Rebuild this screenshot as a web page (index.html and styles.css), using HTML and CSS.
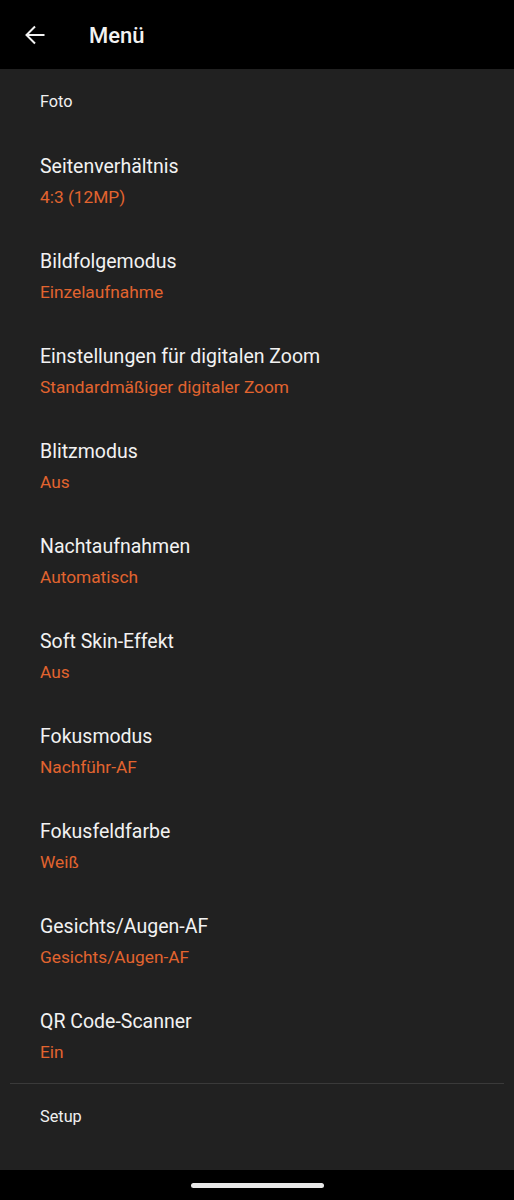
FILE: index.html
```html
<!DOCTYPE html>
<html lang="de">
<head>
<meta charset="utf-8">
<link rel="stylesheet" href="styles.css">
</head>
<body>
<div class="screen">
  <header class="appbar">
    <svg class="back" width="20" height="20" viewBox="0 0 20 20"><path d="M19.5 10H1.5M10 1.5L1.5 10L10 18.5" fill="none" stroke="#f2f2f2" stroke-width="2"/></svg>
    <h1 class="title">Menü</h1>
  </header>
  <main class="content">
    <div class="section">Foto</div>
    <div class="item"><div class="item-title">Seitenverhältnis</div><div class="item-value">4:3 (12MP)</div></div>
    <div class="item"><div class="item-title">Bildfolgemodus</div><div class="item-value">Einzelaufnahme</div></div>
    <div class="item"><div class="item-title">Einstellungen für digitalen Zoom</div><div class="item-value">Standardmäßiger digitaler Zoom</div></div>
    <div class="item"><div class="item-title">Blitzmodus</div><div class="item-value">Aus</div></div>
    <div class="item"><div class="item-title">Nachtaufnahmen</div><div class="item-value">Automatisch</div></div>
    <div class="item"><div class="item-title">Soft Skin-Effekt</div><div class="item-value">Aus</div></div>
    <div class="item"><div class="item-title">Fokusmodus</div><div class="item-value">Nachführ-AF</div></div>
    <div class="item"><div class="item-title">Fokusfeldfarbe</div><div class="item-value">Weiß</div></div>
    <div class="item"><div class="item-title">Gesichts/Augen-AF</div><div class="item-value">Gesichts/Augen-AF</div></div>
    <div class="item"><div class="item-title">QR Code-Scanner</div><div class="item-value">Ein</div></div>
    <div class="divider"></div>
    <div class="section">Setup</div>
  </main>
  <footer class="navbar"><div class="pill"></div></footer>
</div>
</body>
</html>
```
FILE: styles.css
```css
html, body {
  margin: 0;
  padding: 0;
  background: #212121;
}
.screen {
  width: 514px;
  height: 1200px;
  display: flex;
  flex-direction: column;
  font-family: Roboto, "Noto Sans", sans-serif;
  color: #fff;
  overflow: hidden;
}
.appbar {
  height: 69px;
  flex: none;
  background: #000;
  display: flex;
  align-items: center;
}
.back {
  margin-left: 25px;
  margin-top: 1px;
}
.title {
  margin: 2px 0 0 44px;
  font-size: 22px;
  font-weight: 500;
  line-height: 24px;
  color: #f2f2f2;
}
.content {
  flex: 1;
  background: #212121;
  display: flex;
  flex-direction: column;
}
.section {
  padding: 23px 40px 21px;
  font-size: 16.3px;
  line-height: 20px;
  color: #f0f0f0;
}
.item {
  height: 95px;
  box-sizing: border-box;
  padding: 22px 40px 0;
}
.item-title {
  font-size: 19.5px;
  line-height: 24px;
  color: #f2f2f2;
}
.item-value {
  margin-top: 7px;
  font-size: 17.3px;
  line-height: 22px;
  color: #e2642f;
}
.divider {
  height: 1px;
  background: #3a3a3a;
  margin: 0 10px;
}
.navbar {
  height: 30px;
  flex: none;
  background: #000;
  display: flex;
  justify-content: center;
  align-items: center;
}
.pill {
  width: 133px;
  height: 5px;
  border-radius: 3px;
  background: #e8e8e8;
}
```
